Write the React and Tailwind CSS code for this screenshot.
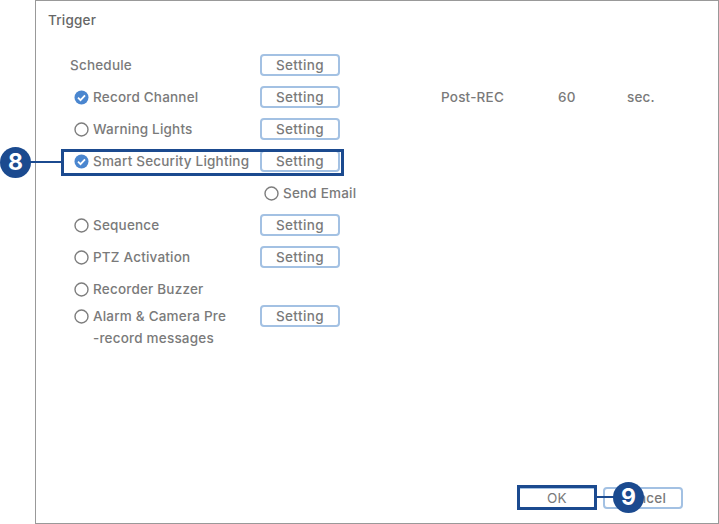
const font = { fontFamily: 'Inter, "Open Sans", sans-serif' };

function Radio({ checked }) {
  if (checked) {
    return (
      <svg width="15" height="15" viewBox="0 0 15 15" className="shrink-0">
        <circle cx="7.5" cy="7.5" r="7" fill="#4a86cf" />
        <path d="M4 7.7l2.5 2.5L11 5.3" fill="none" stroke="#fff" strokeWidth="1.8" />
      </svg>
    );
  }
  return (
    <svg width="15" height="15" viewBox="0 0 15 15" className="shrink-0">
      <circle cx="7.5" cy="7.5" r="6.5" fill="none" stroke="#7d7d7d" strokeWidth="1.4" />
    </svg>
  );
}

function SettingButton() {
  return (
    <button className="w-[80px] h-[22px] rounded-[4px] border-2 border-[#a3c1e3] text-[13.5px] font-medium tracking-[0.4px] text-[#7a7a7a] flex items-center justify-center">
      Setting
    </button>
  );
}

function Row({ label, checked, noRadio, button, extra }) {
  return (
    <div className="h-[32px] flex items-center">
      <div className="w-[186px] flex items-center gap-[4px]">
        {noRadio ? (
          <span className="-ml-[4px]">{label}</span>
        ) : (
          <>
            <Radio checked={checked} />
            <span>{label}</span>
          </>
        )}
      </div>
      {button && <SettingButton />}
      {extra}
    </div>
  );
}

export default function App() {
  return (
    <div style={font} className="relative w-[719px] h-[524px] bg-white overflow-hidden text-[13.5px] font-medium tracking-[0.2px] text-[#7a7a7a]">
      <div className="ml-[35px] h-[524px] border border-[#999] flex flex-col">
        <div className="pl-[12px] pt-[9px] leading-[20px] text-[#666]">Trigger</div>
        <div className="pl-[38px] pt-[19px] flex-1">
          <Row label="Schedule" noRadio button />
          <Row
            label="Record Channel"
            checked
            button
            extra={
              <div className="flex">
                <span className="ml-[101px] w-[117px]">Post-REC</span>
                <span className="w-[69px]">60</span>
                <span>sec.</span>
              </div>
            }
          />
          <Row label="Warning Lights" button />
          <Row label="Smart Security Lighting" checked button />
          <div className="h-[32px] flex items-center gap-[4px] pl-[190px]">
            <Radio />
            <span>Send Email</span>
          </div>
          <Row label="Sequence" button />
          <Row label="PTZ Activation" button />
          <div className="h-[32px] flex items-center gap-[4px]">
            <Radio />
            <span>Recorder Buzzer</span>
          </div>
          <div className="flex">
            <div className="w-[186px] leading-[22px]">
              <div className="flex items-center gap-[4px]">
                <Radio />
                <span>Alarm &amp; Camera Pre</span>
              </div>
              <div className="pl-[19px]">-record messages</div>
            </div>
            <SettingButton />
          </div>
        </div>
        <div className="flex justify-end gap-[6px] pr-[35px] pb-[14px]">
          <button className="w-[80px] h-[22px] rounded-[4px] border-2 border-[#a3c1e3] font-normal flex items-center justify-center">OK</button>
          <button className="w-[80px] h-[22px] rounded-[4px] border-2 border-[#a3c1e3] flex items-center justify-center">Cancel</button>
        </div>
      </div>

      {/* callouts on top of the screenshot */}
      <div className="absolute left-[61px] top-[149px] w-[283px] h-[27px] border-[3px] border-[#1b4a8f]" />
      <div className="absolute left-[28px] top-[161px] w-[34px] h-[2px] bg-[#1b4a8f]" />
      <div className="absolute left-0 top-[147px] w-[31px] h-[31px] rounded-full bg-[#1b4a8f] text-white font-bold text-[23px] flex items-center justify-center">8</div>
      <div className="absolute left-[517px] top-[485px] w-[80px] h-[25px] border-[3px] border-[#1b4a8f]" />
      <div className="absolute left-[596px] top-[496px] w-[20px] h-[2px] bg-[#1b4a8f]" />
      <div className="absolute left-[613px] top-[482px] w-[31px] h-[31px] rounded-full bg-[#1b4a8f] text-white font-bold text-[23px] flex items-center justify-center">9</div>
    </div>
  );
}
